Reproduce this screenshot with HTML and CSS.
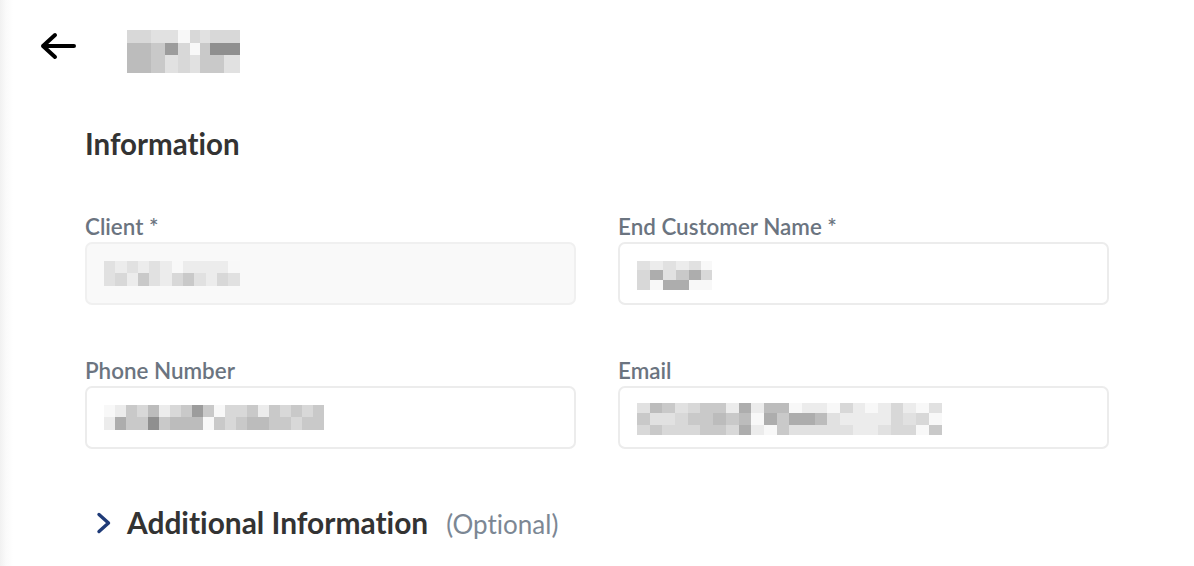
FILE: index.html
```html
<!DOCTYPE html>
<html lang="en">
<head>
<meta charset="utf-8">
<title>Information</title>
<link rel="stylesheet" href="styles.css">
</head>
<body>
<div class="page">
  <header class="topbar">
    <button class="back" aria-label="Back">
      <svg width="36" height="28" viewBox="0 0 36 28" fill="none" stroke="#000" stroke-width="4" stroke-linecap="round" stroke-linejoin="round"><path d="M3 14H34M15 3L3 14L15 25"/></svg>
    </button>
    <div class="mosaic title-mosaic">
      <i class="s3"></i><i class="s3"></i><i class="s2"></i><i class="s2"></i><i class="s0"></i><i class="s3"></i><i class="s2"></i><i class="s3"></i><i class="s3"></i>
      <i class="s5"></i><i class="s5"></i><i class="s4"></i><i class="s7"></i><i class="s3"></i><i class="s0"></i><i class="s4"></i><i class="s8"></i><i class="s8"></i>
      <i class="s5"></i><i class="s5"></i><i class="s4"></i><i class="s2"></i><i class="s3"></i><i class="s2"></i><i class="s4"></i><i class="s4"></i><i class="s2"></i>
    </div>
  </header>

  <main class="content">
    <h2 class="section-title">Information</h2>

    <div class="form-grid">
      <div class="field">
        <label class="label">Client *</label>
        <div class="input disabled">
          <div class="mosaic m-client">
            <i class="s2"></i><i class="s1"></i><i class="s2"></i><i class="s1"></i><i class="s2"></i><i class="s1"></i><i class="s0"></i><i class="s1"></i><i class="s1"></i><i class="s1"></i><i class="s1"></i><i class="s0"></i>
            <i class="s2"></i><i class="s3"></i><i class="s1"></i><i class="s4"></i><i class="s2"></i><i class="s1"></i><i class="s3"></i><i class="s4"></i><i class="s2"></i><i class="s1"></i><i class="s3"></i><i class="s2"></i>
          </div>
        </div>
      </div>
      <div class="field">
        <label class="label">End Customer Name *</label>
        <div class="input">
          <div class="mosaic m-customer">
            <i class="s2"></i><i class="s1"></i><i class="s2"></i><i class="s1"></i><i class="s2"></i><i class="s0"></i>
            <i class="s3"></i><i class="s6"></i><i class="s2"></i><i class="s4"></i><i class="s6"></i><i class="s3"></i>
            <i class="s3"></i><i class="s0"></i><i class="s6"></i><i class="s6"></i><i class="s0"></i><i class="s0"></i>
          </div>
        </div>
      </div>
      <div class="field">
        <label class="label">Phone Number</label>
        <div class="input">
          <div class="mosaic m-phone">
            <i class="s0"></i><i class="s1"></i><i class="s4"></i><i class="s3"></i><i class="s5"></i><i class="s1"></i><i class="s3"></i><i class="s4"></i><i class="s7"></i><i class="s4"></i><i class="s0"></i><i class="s3"></i><i class="s3"></i><i class="s4"></i><i class="s1"></i><i class="s4"></i><i class="s3"></i><i class="s4"></i><i class="s3"></i><i class="s4"></i>
            <i class="s1"></i><i class="s6"></i><i class="s4"></i><i class="s4"></i><i class="s8"></i><i class="s4"></i><i class="s5"></i><i class="s5"></i><i class="s5"></i><i class="s0"></i><i class="s4"></i><i class="s3"></i><i class="s4"></i><i class="s5"></i><i class="s5"></i><i class="s4"></i><i class="s4"></i><i class="s3"></i><i class="s4"></i><i class="s4"></i>
          </div>
        </div>
      </div>
      <div class="field">
        <label class="label">Email</label>
        <div class="input">
          <div class="mosaic m-email">
            <i class="s2"></i><i class="s5"></i><i class="s4"></i><i class="s2"></i><i class="s3"></i><i class="s4"></i><i class="s4"></i><i class="s1"></i><i class="s6"></i><i class="s1"></i><i class="s5"></i><i class="s5"></i><i class="s0"></i><i class="s1"></i><i class="s1"></i><i class="s0"></i><i class="s3"></i><i class="s1"></i><i class="s0"></i><i class="s1"></i><i class="s3"></i><i class="s1"></i><i class="s0"></i><i class="s2"></i>
            <i class="s4"></i><i class="s2"></i><i class="s2"></i><i class="s3"></i><i class="s4"></i><i class="s4"></i><i class="s5"></i><i class="s4"></i><i class="s5"></i><i class="s0"></i><i class="s6"></i><i class="s4"></i><i class="s6"></i><i class="s6"></i><i class="s5"></i><i class="s2"></i><i class="s1"></i><i class="s1"></i><i class="s1"></i><i class="s1"></i><i class="s3"></i><i class="s2"></i><i class="s3"></i><i class="s0"></i>
            <i class="s3"></i><i class="s4"></i><i class="s3"></i><i class="s3"></i><i class="s3"></i><i class="s4"></i><i class="s4"></i><i class="s3"></i><i class="s6"></i><i class="s1"></i><i class="s0"></i><i class="s4"></i><i class="s2"></i><i class="s2"></i><i class="s2"></i><i class="s2"></i><i class="s2"></i><i class="s1"></i><i class="s1"></i><i class="s2"></i><i class="s3"></i><i class="s3"></i><i class="s0"></i><i class="s4"></i>
          </div>
        </div>
      </div>
    </div>

    <div class="accordion">
      <svg class="chev" width="16" height="22" viewBox="0 0 16 22" fill="none" stroke="#1f3b78" stroke-width="3.4" stroke-linecap="round" stroke-linejoin="round"><path d="M3 2.5L12.5 11L3 19.5"/></svg>
      <span class="acc-title">Additional Information</span>
      <span class="acc-opt">(Optional)</span>
    </div>
  </main>
</div>
</body>
</html>
```

FILE: styles.css
```css
* { box-sizing: border-box; }
html, body { margin: 0; padding: 0; }
body {
  background: #fff;
  font-family: "Lato", "Noto Sans", sans-serif;
  font-variant-ligatures: none;
  color: #333;
}
.page {
  width: 1194px;
  height: 566px;
  overflow: hidden;
  background: linear-gradient(to right, #f1f1f1 0px, #fafafa 6px, #fff 13px, #fff 100%);
}
.topbar {
  display: flex;
  align-items: center;
  height: 101px;
  padding-left: 40px;
  padding-bottom: 8px;
}
.back {
  border: 0;
  background: none;
  padding: 0;
  width: 36px;
  height: 28px;
  display: flex;
  margin-top: -2px;
}
.mosaic { display: grid; }
.mosaic i { display: block; }
.title-mosaic {
  margin-left: 51px;
  margin-top: 10px;
  width: 113px;
  grid-template-columns: 11px 13px 14px 13px 12px 10px 10px 14px 16px;
  grid-template-rows: 13px 12px 18px;
}
.s0 { background: #f8f8f8; }
.s1 { background: #ececec; }
.s2 { background: #e1e1e1; }
.s3 { background: #d8d8d8; }
.s4 { background: #c9c9c9; }
.s5 { background: #bcbcbc; }
.s6 { background: #adadad; }
.s7 { background: #9c9c9c; }
.s8 { background: #8f8f8f; }

.content {
  padding-left: 85px;
  width: 1109px;
}
.section-title {
  margin: 0;
  font-size: 29.5px;
  font-weight: 700;
  line-height: 32px;
  padding-top: 27px;
  color: #333;
}
.form-grid {
  display: grid;
  grid-template-columns: 491px 491px;
  column-gap: 42px;
  row-gap: 54px;
  margin-top: 55px;
}
.field { display: flex; flex-direction: column; }
.label {
  font-size: 22.4px;
  font-weight: 600;
  color: #6b7480;
  line-height: 24px;
  margin-bottom: 3px;
}
.input {
  height: 63px;
  border: 2px solid #ececec;
  border-radius: 7px;
  background: #fff;
  display: flex;
  align-items: center;
  padding-left: 17px;
}
.input.disabled { background: #f9f9f9; border-color: #f0f0f0; }
.m-client {
  grid-template-columns: repeat(12, 11.3px);
  grid-template-rows: 12px 13px;
}
.m-customer {
  grid-template-columns: 13px 13px 13px 13px 12px 11px;
  grid-template-rows: 9px 10px 10px;
  margin-top: 4px;
}
.m-phone {
  grid-template-columns: repeat(20, 11px);
  grid-template-rows: 12px 13px;
}
.m-email {
  grid-template-columns: repeat(24, 12.7px);
  grid-template-rows: 10px 12px 10px;
  margin-top: 2px;
}
.accordion {
  display: flex;
  align-items: baseline;
  margin-top: 55px;
  padding-left: 11px;
  line-height: 36px;
}
.chev { align-self: center; margin-right: 15px; }
.acc-title { font-size: 29.9px; font-weight: 700; color: #333; }
.acc-opt { font-size: 26px; color: #7c8794; margin-left: 18px; }
```
